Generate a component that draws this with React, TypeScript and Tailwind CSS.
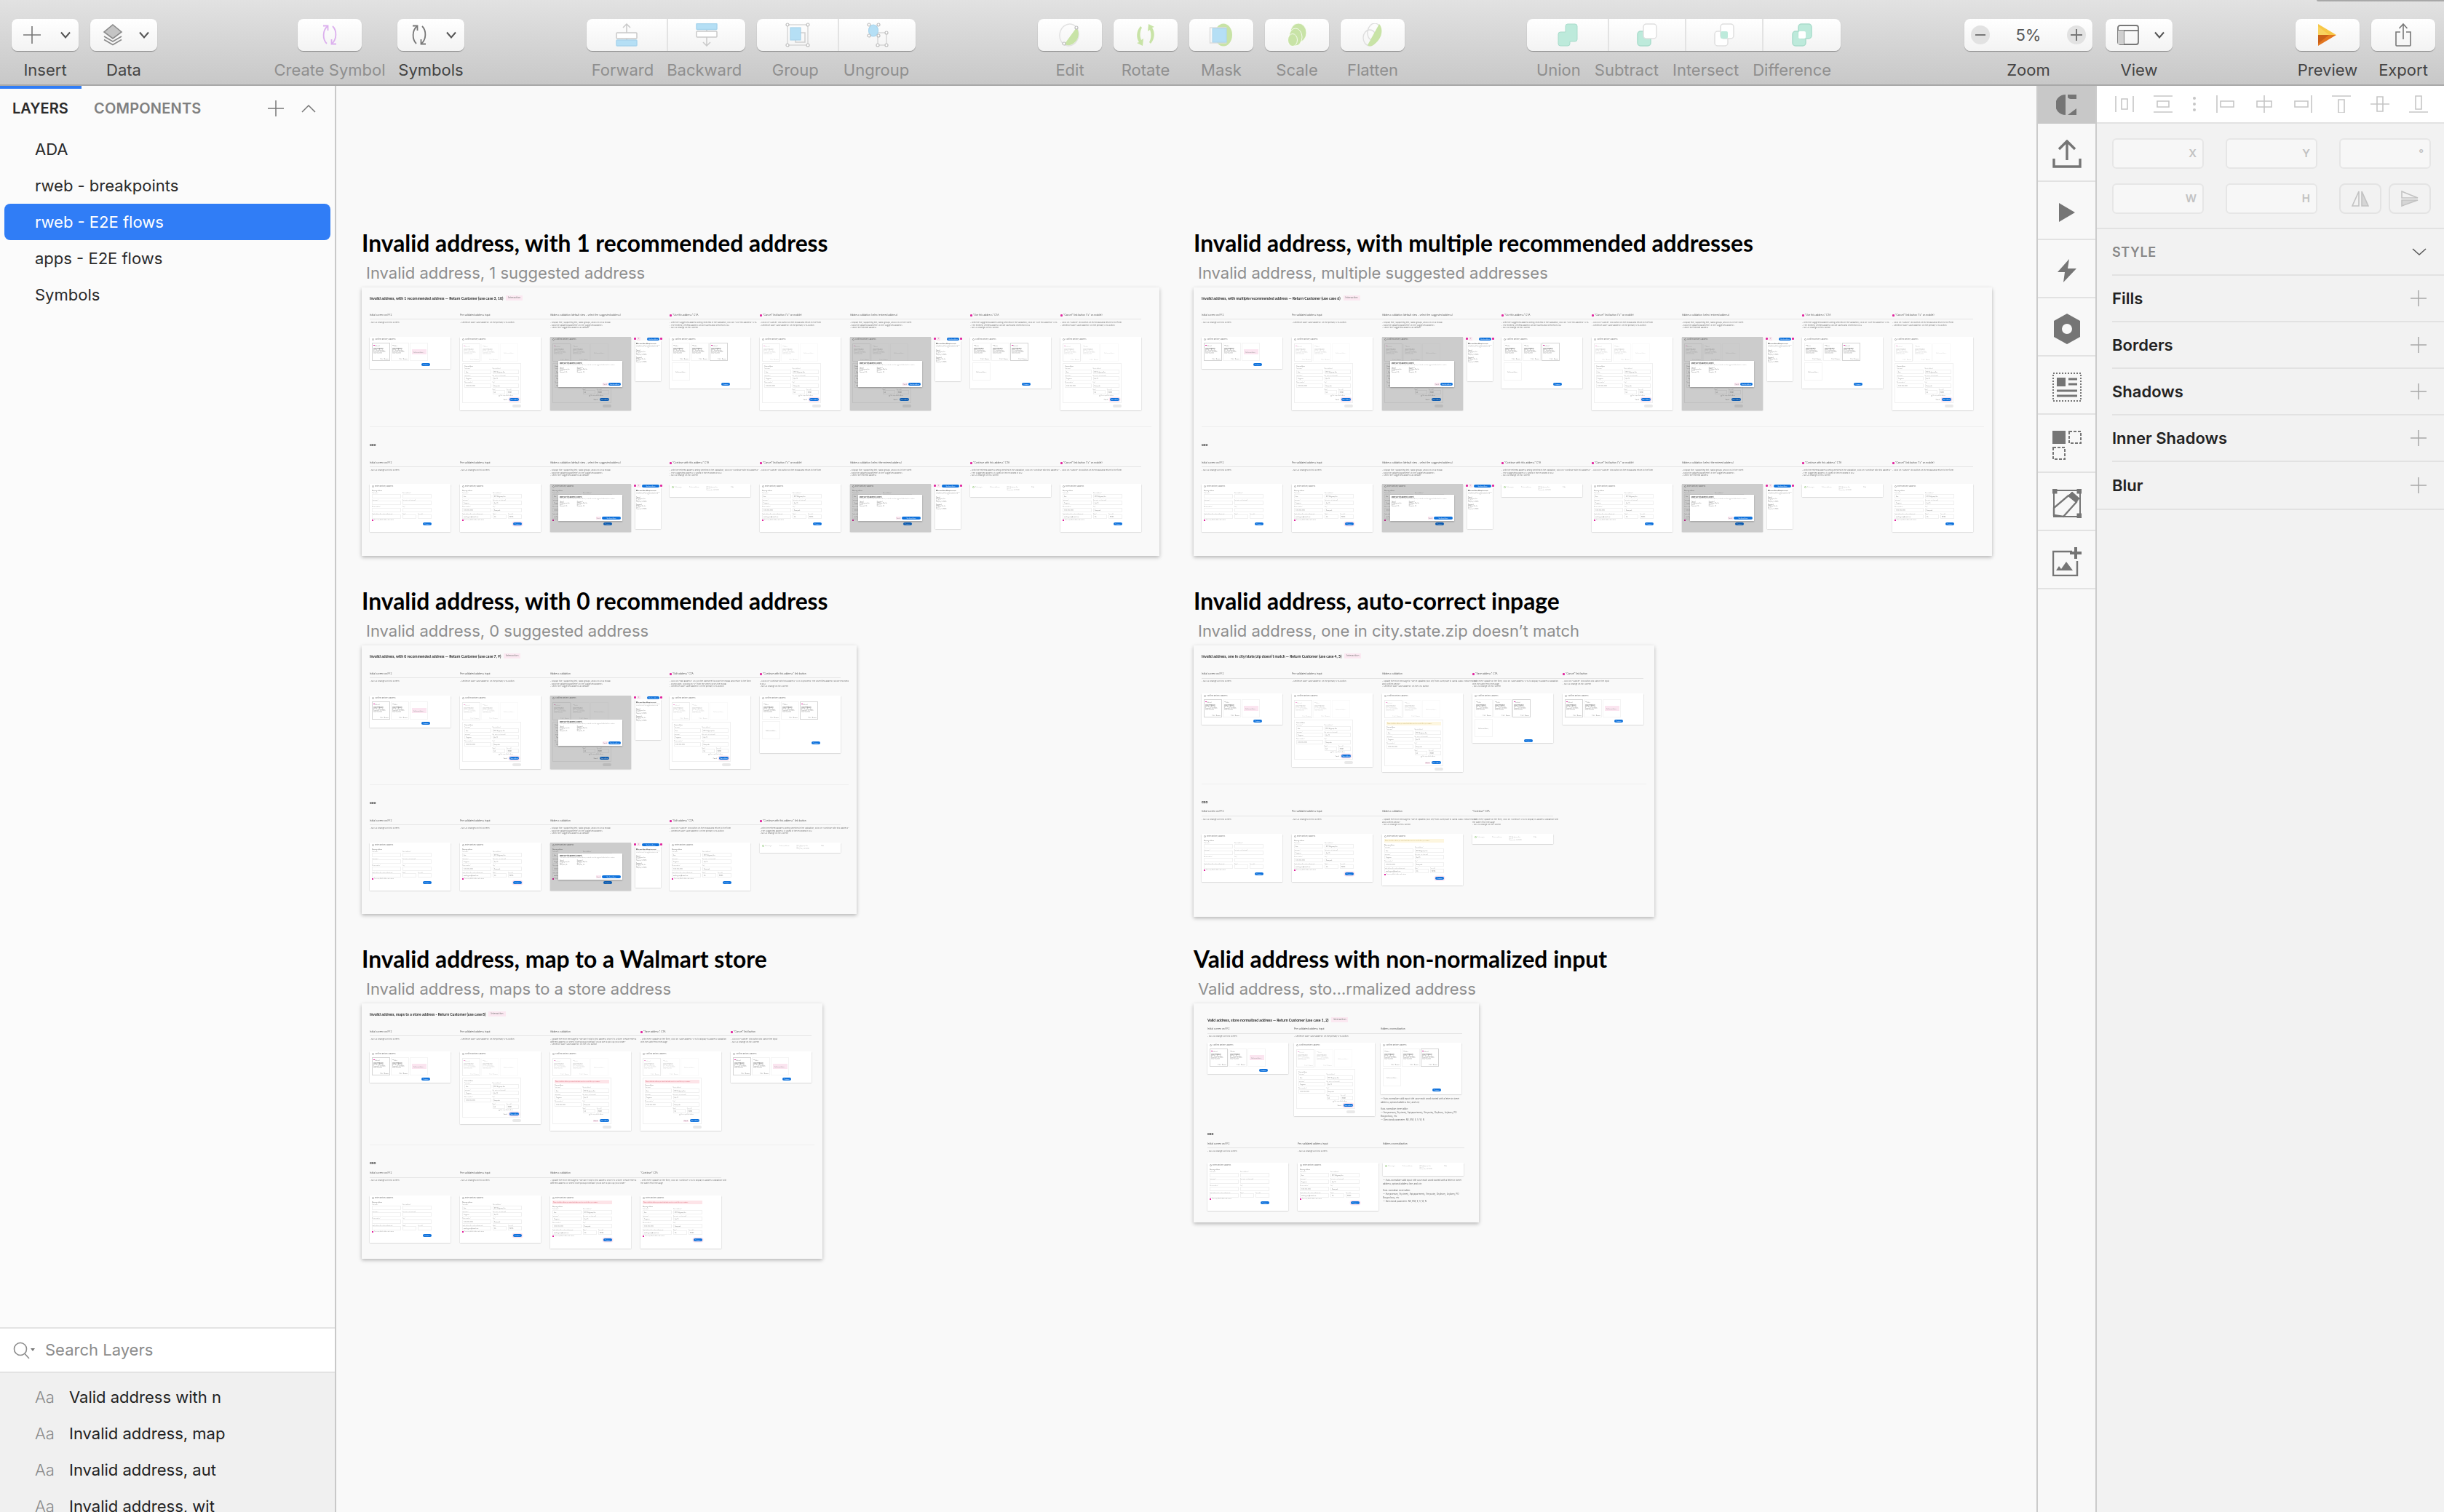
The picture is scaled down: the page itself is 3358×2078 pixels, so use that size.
import React from "react";

type Col = { t: string; m?: boolean; d: string[]; s: string; h: number; a: number; notes?: boolean };
type Sec = { title: number; rule: number; desc: number; screens: number; cols: Col[] };
type Board = {
  x: number; y: number; w: number; h: number; pad: number; title: string; sub: string; heading: string; headY: number;
  A: Sec; div?: number; gxo: number; B: Sec;
};

const Ring = () => <span className="block h-[3px] w-[3px] rounded-full border border-[#aaaaaa]" />;

const Head = ({ t = "Confirm delivery address" }: { t?: string }) => (
  <div className="flex h-[5px] items-center gap-[1px]">
    <Ring />
    <span className="text-[2.4px] leading-[3px] whitespace-nowrap text-[#777777]">{t}</span>
  </div>
);

const Blue = ({ t = "Continue", w = "w-[12px]", halo = false }: { t?: string; w?: string; halo?: boolean }) => (
  <span className={`flex h-[4px] items-center justify-center rounded-full bg-[#0f72dc] text-[1.6px] leading-[2px] text-white ${w} ${halo ? "shadow-[0_0_0_1.5px_#fbe3ef]" : ""}`}>{t}</span>
);

const Card = ({ sel, fade, active }: { sel?: boolean; fade?: boolean; active?: boolean }) => (
  <div className={`flex h-[25px] w-[25px] shrink-0 flex-col border p-[1px] ${sel ? "border-[#d4d4d4]" : "border-[#f3f3f3]"} ${fade ? "opacity-40" : ""}`}>
    <div className="flex h-[3px] items-center gap-[0.5px]">
      <span className={`block h-[1.5px] w-[1.5px] ${active ? "bg-[#e0279f]" : "bg-[#cccccc]"}`} />
      <span className="text-[1.6px] leading-[2px] text-[#777777]">{active ? "Selected" : "Select"}</span>
    </div>
    <span className="mt-[2px] text-[1.9px] leading-[2.4px] font-medium whitespace-nowrap text-[#666666]">Anna Ferguson</span>
    <span className="text-[1.6px] leading-[2px] whitespace-nowrap text-[#888888]">8512 Ridgeway Ave</span>
    <span className="text-[1.6px] leading-[2px] whitespace-nowrap text-[#888888]">Sunnyvale, CA 94085</span>
    <span className="text-[1.6px] leading-[2px] whitespace-nowrap text-[#888888]">(555) 555-5555</span>
    <div className="mt-auto flex justify-end gap-[1px] text-[1.6px] leading-[2px] text-[#777777]">
      <span>Edit</span><span>|</span><span>Remove</span>
    </div>
  </div>
);

const AddCard = ({ pink, fade }: { pink?: boolean; fade?: boolean }) => (
  <div className={`flex h-[25px] w-[25px] shrink-0 items-center justify-center border border-[#f4f4f4] ${fade ? "opacity-40" : ""}`}>
    <span className={`flex h-[7px] w-[20px] items-center justify-center text-[1.6px] leading-[2px] whitespace-nowrap text-[#888888] ${pink ? "bg-[#fbe5f0]" : ""}`}>Add new address +</span>
  </div>
);

const Field = ({ l, v, cls = "" }: { l: string; v?: string; cls?: string }) => (
  <div className={`flex flex-col ${cls}`}>
    <span className="h-[2.5px] text-[1.6px] leading-[2.5px] whitespace-nowrap text-[#a9a9a9]">{l}</span>
    <span className="flex h-[6px] items-center border border-[#f0f0f0] pl-[1px] text-[1.7px] leading-[2px] whitespace-nowrap text-[#777777]">{v}</span>
  </div>
);

const Fields = ({ filled, email }: { filled?: boolean; email?: boolean }) => (
  <div className="grid grid-cols-2 gap-x-[2px] gap-y-[1px]">
    <Field l="First name*" v={filled ? "Ann" : ""} />
    <Field l="Street address*" v={filled ? "8512 Ridgeway Ave" : ""} />
    <Field l="Last name*" v={filled ? "Ferguson" : ""} />
    <Field l="Apt, suite, etc (optional)" v={filled ? "Apt 23" : ""} />
    <Field l="Phone number*" v={filled ? "(555) 555-5555" : ""} />
    <Field l="City*" v={filled ? "Sunnyvale" : ""} />
    {email ? <Field l="Email address (for order notifications)" v={filled ? "ann.ferguson@email.com" : ""} /> : <span />}
    <div className="flex gap-[2px]">
      <Field l="State*" v={filled ? "CA" : ""} cls="flex-1" />
      <Field l="Zip code*" v={filled ? "94085" : ""} cls="flex-1" />
    </div>
  </div>
);

const Banner = ({ c }: { c?: string }) =>
  c ? (
    <div className={`mb-[1px] flex h-[5px] items-center px-[1px] text-[1.5px] leading-[2px] ${c === "y" ? "bg-[#fdf6df] text-[#c9b36a]" : "bg-[#fde4e8] text-[#d9606f]"}`}>
      Please check the address you entered and make sure it is correct before you continue.
    </div>
  ) : null;

const Panel = ({ banner, halo }: { banner?: string; halo?: boolean }) => (
  <div className={`mt-[2px] flex w-[81px] flex-col border border-[#f0f0f0] p-[2px] ${banner ? "h-[64px]" : "h-[55px]"}`}>
    <Banner c={banner} />
    <span className="h-[3px] text-[1.7px] leading-[3px] text-[#666666]">Home address</span>
    <Fields filled />
    <div className="mt-[1px] flex items-center justify-end gap-[1px] pr-[8px]">
      <span className="block h-[1.5px] w-[1.5px] border border-[#dddddd]" />
      <span className="text-[1.4px] leading-[2px] text-[#999999]">Use as my default address</span>
    </div>
    <div className="mt-auto flex items-center justify-end gap-[2px]">
      <span className={`px-[1px] text-[1.6px] leading-[3px] text-[#666666] ${banner ? "bg-[#fbe5f0]" : ""}`}>Cancel</span>
      <Blue t="Save address" w="w-[13px]" halo={halo} />
    </div>
  </div>
);

const Pill = () => <div className="mt-[2px] ml-[69px] h-[4px] w-[12px] rounded-full bg-[#e9e9e9]" />;

const Cards = ({ fade, third }: { fade?: boolean; third?: boolean }) => (
  <div className="flex gap-[1px]">
    <Card sel={!third} active={!third} fade={fade} />
    <Card fade={fade} />
    {third ? <Card sel active /> : <AddCard pink={!fade} fade={fade} />}
  </div>
);

const Shell = ({ h, w = 111, children }: { h: number; w?: number; children: React.ReactNode }) => (
  <div className="relative flex shrink-0 flex-col overflow-hidden bg-white px-[3px] pt-[1px] shadow-[0_0.5px_1.5px_rgba(0,0,0,0.3)]" style={{ width: w, height: h }}>
    {children}
  </div>
);

const FormInner = ({ banner, halo }: { banner?: string; halo?: boolean }) => (
  <>
    <Head />
    <div className="mt-[3px]"><Cards fade /></div>
    <Panel banner={banner} halo={halo} />
    <Pill />
  </>
);

const GxoInner = ({ filled, banner, halo }: { filled?: boolean; banner?: string; halo?: boolean }) => (
  <>
    <Head t="Enter delivery address" />
    <div className="mt-[1px] w-[82px]">
      <Banner c={banner} />
      <span className="block h-[4px] text-[1.7px] leading-[4px] text-[#666666]">Shipping address</span>
      <Fields filled={filled} email />
      <div className="mt-[1px] flex items-center gap-[1px]">
        <span className="block h-[2px] w-[2px] bg-[#e0279f]" />
        <span className="text-[1.4px] leading-[2px] text-[#999999]">Save as my default address and continue</span>
      </div>
      <div className="mt-[2px] flex justify-end"><Blue halo={halo} /></div>
    </div>
  </>
);

const Dot = () => <span className="block h-[3px] w-[3px] shrink-0 rounded-[1px] bg-[#e0279f]" />;

const Side = ({ gxo }: { gxo?: boolean }) => (
  <div className="flex w-[39px] shrink-0 flex-col">
    <div className="flex h-[5px] items-center gap-[1px]">
      <Dot />
      <span className="flex h-[5px] w-[5px] items-center justify-center bg-[#fbe5f0] text-[2px] text-[#999999]">x</span>
      <span className="ml-auto flex"><Blue t="Use this address" w={gxo ? "w-[24px]" : "w-[17px]"} /></span>
      <Dot />
    </div>
    <div className={`mx-[2px] flex flex-col bg-white p-[1px] shadow-[0_0.5px_1.5px_rgba(0,0,0,0.3)] ${gxo ? "h-[57px]" : "h-[56px]"}`}>
      <span className="mt-[2px] text-[1.7px] leading-[2.4px] font-bold text-[#444444]">Make sure this address is correct</span>
      <span className="mt-[1px] text-[1.3px] leading-[1.9px] text-[#999999]">Your address couldn&apos;t be verified. Check the address you entered or use the suggested address below.</span>
      <span className="mt-[3px] text-[1.5px] leading-[2px] text-[#666666]">Entered</span>
      <span className="text-[1.4px] leading-[1.9px] text-[#888888]">8512 Ridgeway Ave<br />Apt 23<br />Sunnyvale, CA 94085</span>
      <span className="mt-[2px] text-[1.5px] leading-[2px] text-[#666666]">Suggested</span>
      <span className="text-[1.4px] leading-[1.9px] text-[#888888]">8512 Ridge Way Ave<br />Apt 23<br />Sunnyvale, CA 94085</span>
    </div>
  </div>
);

const Overlay = ({ h, gxo }: { h: number; gxo?: boolean }) => (
  <div className="flex gap-[4px]">
    <Shell h={h}>
      {gxo ? <GxoInner filled /> : <FormInner />}
      <div className="absolute inset-0 bg-black/20" />
      <div className={`absolute left-[11px] flex h-[36px] w-[88px] flex-col bg-white p-[2px] shadow-[0_1px_2px_rgba(0,0,0,0.25)] ${gxo ? "top-[15px]" : "top-[33px]"}`}>
        <span className="text-[1.9px] leading-[3px] font-bold text-[#444444]">Make sure this address is correct</span>
        <span className="text-[1.4px] leading-[2px] text-[#aaaaaa]">Your address couldn&apos;t be verified. Check the address you entered or use the suggested address below to continue.</span>
        <div className="mt-[2px] flex gap-[10px] text-[1.5px] leading-[2px] text-[#777777]">
          <span>Entered<br />8512 Ridgeway Ave<br />Apt 23<br />Sunnyvale, CA</span>
          <span>Suggested<br />8512 Ridge Way Ave<br />Apt 23<br />Sunnyvale, CA</span>
        </div>
        <div className="mt-auto flex items-center justify-end gap-[1px]">
          <span className="bg-[#fbe5f0] px-[1px] text-[1.6px] leading-[4px] text-[#888888]">Cancel</span>
          <Blue t="Use this address" w={gxo ? "w-[26px]" : "w-[17px]"} />
        </div>
      </div>
    </Shell>
    <Side gxo={gxo} />
  </div>
);

const Strip = ({ h }: { h: number }) => (
  <Shell h={h}>
    <div className="mt-[2px] flex gap-[10px] text-[1.7px] leading-[2.2px] text-[#bbbbbb]">
      <span className="flex gap-[1px]"><span className="block h-[3px] w-[3px] rounded-full border border-[#9fd08a]" />Delivering to</span>
      <span>Delivery address</span>
      <span className="w-[24px]">8512 Ridgeway Ave<br />Apt 23<br />Sunnyvale, CA 94085</span>
      <span className="text-[#888888]">Edit</span>
    </div>
  </Shell>
);

const Screen = ({ c }: { c: Col }) => {
  const { s, h } = c;
  if (s === "initial")
    return (
      <Shell h={h}>
        <Head />
        <div className="mt-[2px]"><Cards /></div>
        <div className="mt-[3px] flex w-[80px] justify-end"><Blue /></div>
      </Shell>
    );
  if (s === "selected")
    return (
      <Shell h={h}>
        <Head />
        <div className="mt-[2px]"><Cards third /></div>
        <div className="mt-[2px]"><AddCard /></div>
        <div className="mt-[3px] flex w-[80px] justify-end"><Blue /></div>
      </Shell>
    );
  if (s === "form") return <Shell h={h}><FormInner halo /></Shell>;
  if (s === "formY") return <Shell h={h}><FormInner banner="y" /></Shell>;
  if (s === "formR") return <Shell h={h}><FormInner banner="r" /></Shell>;
  if (s === "overlay") return <Overlay h={h} />;
  if (s === "gxoOverlay") return <Overlay h={h} gxo />;
  if (s === "gxoEmpty") return <Shell h={h}><GxoInner /></Shell>;
  if (s === "gxoFilled") return <Shell h={h}><GxoInner filled /></Shell>;
  if (s === "gxoHalo") return <Shell h={h}><GxoInner filled halo /></Shell>;
  if (s === "gxoY") return <Shell h={h}><GxoInner filled banner="y" halo /></Shell>;
  if (s === "gxoR") return <Shell h={h}><GxoInner filled banner="r" halo /></Shell>;
  return <Strip h={h} />;
};

const Notes = () => (
  <div className="mt-[4px] w-[112px] text-[2.9px] leading-[5.3px] text-[#666666]">
    <p>— Auto-normalize valid input: title case each word started with a letter in street address, optional address line, and city</p>
    <p className="mt-[3px]">Auto-normalize street abbr:</p>
    <p>— Ave(avenue), St(street), Apt(apartment), Ste(suite), Dr(drive), Ln(lane), PO Box(po box), etc</p>
    <p>— Directional parameter: NE, NW, E, S, W, N</p>
  </div>
);

const Section = ({ s, height }: { s: Sec; height: number }) => (
  <div className="flex shrink-0" style={{ height }}>
    {s.cols.map((c, i) => (
      <div key={i} className="flex shrink-0 flex-col" style={{ width: c.a }}>
        <div className="flex items-start gap-[1px]" style={{ height: s.rule - s.title + 5 }}>
          {c.m ? <span className="mt-[3.5px]"><Dot /></span> : null}
          <span className="text-[3.2px] leading-[10px] whitespace-nowrap text-[#555555]">{c.t}</span>
        </div>
        <div className="h-px w-full shrink-0 bg-[#e4e4e4]" />
        <div className="pr-[8px]" style={{ height: s.screens - s.rule - 1, paddingTop: s.desc - s.rule - 3 }}>
          {c.d.map((l, j) => (
            <p key={j} className="text-[2.7px] leading-[3.7px] whitespace-nowrap text-[#777777]">{l}</p>
          ))}
        </div>
        <Screen c={c} />
        {c.notes ? <Notes /> : null}
      </div>
    ))}
  </div>
);

const NC = "- No UX changes on this screen";
const SC = "- Sentence case 'Save address' on the primary CTA button";
const VAL = ["- Display title, supporting text, radio groups, and CTAs in a modal", "- Bold the updated parameters in the suggested address", "- Select the suggested address as default"];
const VALE = ["- Display title, supporting text, radio groups, and CTAs in the sheet", "- Bold the updated parameters in the suggested address", "- Select the entered address"];
const USE = ["- With the suggested address being selected in the validation, click on \"Use this address\" CTA", "- The entered, verified address will be saved and selected in FF2", "- No UX change on this screen"];
const CAN = ["- Click on \"Cancel\" link button on the modal and return to the form", "- Sentence case 'Save address' on the primary CTA button"];
const CONT = ["- With the entered address being selected in the validation, click on \"Continue with this address\"", "- The suggested address is saved in the recorded in FF2", "- No UX change on this screen"];

const rowA12 = (): Col[] => [
  { t: "Initial screen on FF2", d: [NC], s: "initial", h: 44, a: 124 },
  { t: "Pre-validated address input", d: [SC], s: "form", h: 101, a: 124 },
  { t: "Address validation (default view - select the suggested address)", d: VAL, s: "overlay", h: 101, a: 164 },
  { t: "\"Use this address\" CTA", m: true, d: USE, s: "selected", h: 71, a: 124 },
  { t: "\"Cancel\" link button (\"x\" on mobile)", m: true, d: CAN, s: "form", h: 101, a: 124 },
  { t: "Address validation (select entered address)", d: VALE, s: "overlay", h: 101, a: 165 },
  { t: "\"Use this address\" CTA", m: true, d: USE, s: "selected", h: 71, a: 124 },
  { t: "\"Cancel\" link button (\"x\" on mobile)", m: true, d: CAN, s: "form", h: 101, a: 111 },
];
const rowB12 = (): Col[] => [
  { t: "Initial screen on FF2", d: [NC], s: "gxoEmpty", h: 66, a: 124 },
  { t: "Pre-validated address input", d: [NC], s: "gxoHalo", h: 66, a: 124 },
  { t: "Address validation (default view - select the suggested address)", d: VAL, s: "gxoOverlay", h: 66, a: 164 },
  { t: "\"Continue with this address\" CTA", m: true, d: CONT, s: "strip", h: 18, a: 124 },
  { t: "\"Cancel\" link button (\"x\" on mobile)", m: true, d: CAN.slice(0, 1), s: "gxoFilled", h: 66, a: 124 },
  { t: "Address validation (select the entered address)", d: VALE, s: "gxoOverlay", h: 66, a: 165 },
  { t: "\"Continue with this address\" CTA", m: true, d: CONT, s: "strip", h: 18, a: 124 },
  { t: "\"Cancel\" link button (\"x\" on mobile)", m: true, d: CAN.slice(0, 1), s: "gxoFilled", h: 66, a: 111 },
];

const secA12 = { title: 38, rule: 43, desc: 49, screens: 68 };
const secB12 = { title: 241, rule: 246, desc: 252, screens: 270 };

const boards: Board[] = [
  {
    x: 497, y: 395, w: 1096, h: 369, pad: 11,
    title: "Invalid address, with 1 recommended address", sub: "Invalid address, 1 suggested address",
    heading: "Invalid address, with 1 recommended address — Return Customer (use case 3, 10)", headY: 15,
    A: { ...secA12, cols: rowA12() }, div: 191, gxo: 217, B: { ...secB12, cols: rowB12() },
  },
  {
    x: 1640, y: 395, w: 1097, h: 369, pad: 11,
    title: "Invalid address, with multiple recommended addresses", sub: "Invalid address, multiple suggested addresses",
    heading: "Invalid address, with multiple recommended address — Return Customer (use case 6)", headY: 15,
    A: { ...secA12, cols: rowA12() }, div: 191, gxo: 217, B: { ...secB12, cols: rowB12() },
  },
  {
    x: 497, y: 887, w: 680, h: 369, pad: 11,
    title: "Invalid address, with 0 recommended address", sub: "Invalid address, 0 suggested address",
    heading: "Invalid address, with 0 recommended address — Return Customer (use case 7, 9)", headY: 15,
    A: {
      title: 39, rule: 44, desc: 50, screens: 69,
      cols: [
        { t: "Initial screen on FF2", d: [NC], s: "initial", h: 44, a: 124 },
        { t: "Pre-validated address input", d: [SC], s: "form", h: 101, a: 124 },
        { t: "Address validation", d: VAL, s: "overlay", h: 101, a: 164 },
        { t: "\"Edit address\" CTA", m: true, d: ["- Click on \"Edit address\" CTA on the sidesheet to close the modal and return to the form", "- Dismissible; clicking on \"x\" from the sheet closes the modal", "- Sentence case 'Save address' on the primary CTA button"], s: "form", h: 101, a: 124 },
        { t: "\"Continue with this address\" link button", m: true, d: ["- Click on \"Continue with this address\" CTA to proceed. The unverified address will be recorded", "in FF2", "- No UX change on this screen"], s: "selected", h: 79, a: 111 },
      ],
    },
    div: 191, gxo: 217,
    B: {
      title: 241, rule: 246, desc: 252, screens: 271,
      cols: [
        { t: "Initial screen on FF2", d: [NC], s: "gxoEmpty", h: 66, a: 124 },
        { t: "Pre-validated address input", d: [NC], s: "gxoHalo", h: 66, a: 124 },
        { t: "Address validation", d: VAL, s: "gxoOverlay", h: 66, a: 164 },
        { t: "\"Edit address\" CTA", m: true, d: CAN, s: "gxoFilled", h: 66, a: 124 },
        { t: "\"Continue with this address\" link button", m: true, d: CONT, s: "strip", h: 14, a: 111 },
      ],
    },
  },
  {
    x: 1640, y: 887, w: 633, h: 373, pad: 11,
    title: "Invalid address, auto-correct inpage", sub: "Invalid address, one in city.state.zip doesn’t match",
    heading: "Invalid address, one in city/state/zip doesn’t match — Return Customer (use case 4, 5)", headY: 15,
    A: {
      title: 39, rule: 45, desc: 50, screens: 66,
      cols: [
        { t: "Initial screen on FF2", d: [NC], s: "initial", h: 43, a: 124 },
        { t: "Pre-validated address input", d: [SC], s: "form", h: 101, a: 124 },
        { t: "Address validation", d: ["- Update the error message to \"We've updated your city from Sunnyvale to Santa Clara. Please review", "and confirm below\"", "- Sentence case 'Save address' on the CTA button"], s: "formY", h: 108, a: 124 },
        { t: "\"Save address\" CTA", m: true, d: ["- With every update on the form, click on 'Save address' CTA to display in-address validation", "with the same error message", "- No UX change on this screen"], s: "selected", h: 68, a: 124 },
        { t: "\"Cancel\" link button", m: true, d: ["- Click on \"Cancel\" link button will cancel the input", "- No UX change on this screen"], s: "initial", h: 43, a: 111 },
      ],
    },
    div: 190, gxo: 216,
    B: {
      title: 228, rule: 234, desc: 240, screens: 259,
      cols: [
        { t: "Initial screen on FF2", d: [NC], s: "gxoEmpty", h: 66, a: 124 },
        { t: "Pre-validated address input", d: [NC], s: "gxoHalo", h: 66, a: 124 },
        { t: "Address validation", d: ["- Update the error message to \"We've updated your city from Sunnyvale to Santa Clara. Please review", "and confirm below\"", "- No UX change on this screen"], s: "gxoY", h: 71, a: 124 },
        { t: "\"Continue\" CTA", d: ["- With every update on the form, click on 'Continue' CTA to display in-address validation with", "the same error message", "- No UX change on this screen"], s: "strip", h: 14, a: 111 },
      ],
    },
  },
  {
    x: 497, y: 1379, w: 633, h: 351, pad: 11,
    title: "Invalid address, map to a Walmart store", sub: "Invalid address, maps to a store address",
    heading: "Invalid address, maps to a store address - Return Customer (use case 8)", headY: 15,
    A: {
      title: 39, rule: 44, desc: 50, screens: 66,
      cols: [
        { t: "Initial screen on FF2", d: [NC], s: "initial", h: 43, a: 124 },
        { t: "Pre-validated address input", d: [SC], s: "form", h: 100, a: 124 },
        { t: "Address validation", d: ["- Update the error message to \"We can't ship to this address since it's a store. Please enter a", "different address or select store pickup instead if you'd like to pick up your order\"", "- Sentence case 'Save address' on the CTA button"], s: "formR", h: 109, a: 124 },
        { t: "\"Save address\" CTA", m: true, d: ["- With every update on the form, click on 'Save address' CTA to display in-address validation", "with the same error message"], s: "formR", h: 109, a: 124 },
        { t: "\"Cancel\" link button", m: true, d: ["- Click on \"Cancel\" link button will cancel the input", "- No UX change on this screen"], s: "initial", h: 43, a: 111 },
      ],
    },
    div: 194, gxo: 220,
    B: {
      title: 233, rule: 239, desc: 244, screens: 264,
      cols: [
        { t: "Initial screen on FF2", d: [NC], s: "gxoEmpty", h: 65, a: 124 },
        { t: "Pre-validated address input", d: [NC], s: "gxoHalo", h: 65, a: 124 },
        { t: "Address validation", d: ["- Update the error message to \"We can't ship to this address since it's a store. Please enter a", "different address or select store pickup instead if you'd like to pick up your order\""], s: "gxoR", h: 73, a: 124 },
        { t: "\"Continue\" CTA", d: ["- With every update on the form, click on 'Continue' CTA to display in-address validation with", "the same error message"], s: "gxoR", h: 73, a: 111 },
      ],
    },
  },
  {
    x: 1640, y: 1379, w: 392, h: 301, pad: 19,
    title: "Valid address with non-normalized input", sub: "Valid address, sto…rmalized address",
    heading: "Valid address, store normalized address — Return Customer (use case 1, 2)", headY: 23,
    A: {
      title: 35, rule: 41, desc: 46, screens: 54,
      cols: [
        { t: "Initial screen on FF2", d: [NC], s: "initial", h: 43, a: 119 },
        { t: "Pre-validated address input", d: [SC], s: "form", h: 101, a: 119 },
        { t: "Address normalization", d: [], s: "selected", h: 71, a: 112, notes: true },
      ],
    },
    gxo: 180,
    B: {
      title: 193, rule: 198, desc: 204, screens: 219,
      cols: [
        { t: "Initial screen on FF2", d: [NC], s: "gxoEmpty", h: 66, a: 124 },
        { t: "Pre-validated address input", d: [NC], s: "gxoHalo", h: 66, a: 117 },
        { t: "Address normalization", d: [], s: "strip", h: 18, a: 112, notes: true },
      ],
    },
  },
];

const Artboard = ({ b }: { b: Board }) => {
  const topA = b.A.title - 5;
  const topB = b.B.title - 5;
  const divAt = b.div ?? b.gxo - 8;
  return (
    <div className="absolute flex flex-col" style={{ left: b.x - 462, top: b.y - 80 - 118, width: b.w }}>
      <div className="flex h-[40px] items-center font-[Lato,sans-serif] text-[31.8px] font-bold whitespace-nowrap text-black">{b.title}</div>
      <div className="flex h-[40px] items-center pl-[6px] text-[22px] whitespace-nowrap text-[#8e8e8e]">{b.sub}</div>
      <div className="overflow-hidden bg-[#f9f9f9] shadow-[0_2px_5px_rgba(0,0,0,0.28)]" style={{ height: b.h }}>
        <div className="flex h-full flex-col blur-[0.35px]" style={{ paddingLeft: b.pad, paddingRight: b.pad }}>
          <div className="flex shrink-0 items-start gap-[4px]" style={{ height: topA, paddingTop: b.headY - 4 }}>
            <span className="font-[Lato,sans-serif] text-[5.1px] leading-[8px] font-bold whitespace-nowrap text-[#222222]">{b.heading}</span>
            <span className="flex h-[7px] items-center bg-[#fbe8f1] px-[3px] text-[3.4px] text-[#777777]">Interaction</span>
          </div>
          <Section s={b.A} height={divAt - topA} />
          <div className={`h-px w-full shrink-0 ${b.div ? "bg-[#efefef]" : ""}`} />
          <div className="shrink-0" style={{ height: topB - divAt - 1, paddingTop: b.gxo - divAt - 1 - 4 }}>
            <span className="block text-[3.8px] leading-[8px] font-bold text-[#222222]">GXO</span>
          </div>
          <Section s={b.B} height={200} />
        </div>
      </div>
    </div>
  );
};

/* ---------- toolbar icons ---------- */
const Chev = () => (
  <svg width="14" height="10" viewBox="0 0 14 10" fill="none" stroke="#555" strokeWidth="2"><path d="M1 1.5 7 8.5 13 1.5" /></svg>
);
const PlusI = () => (
  <svg width="24" height="24" viewBox="0 0 24 24" stroke="#777" strokeWidth="1.6"><path d="M12 0v24M0 12h24" /></svg>
);
const DataI = () => (
  <svg width="30" height="30" viewBox="0 0 30 30" fill="none" stroke="#8a8a8a" strokeWidth="1.6">
    <path d="M15 1 27 11 15 20 3 11Z" fill="#c4c4c4" />
    <path d="M3 17 15 24 27 17M3 21.5 15 28.5 27 21.5" />
  </svg>
);
const SymI = ({ c, c2 }: { c: string; c2?: string }) => (
  <svg width="28" height="30" viewBox="0 0 28 30" fill="none" stroke={c} strokeWidth="1.8">
    <path d="M11 3C4 9 4 21 10 27" />
    <path d="M5 2.5h6.5V9" />
    <path d="M17 27C24 21 24 9 18 3" stroke={c2 ?? c} />
    <path d="M23 27.5h-6.5V21" stroke={c2 ?? c} />
  </svg>
);
const ForwardI = () => (
  <svg width="30" height="32" viewBox="0 0 30 32" fill="none" stroke="#c9c9c9" strokeWidth="1.5">
    <path d="M15 1v24M10 6l5-5 5 5" />
    <rect x="1" y="13" width="28" height="8" rx="1" fill="#fff" />
    <rect x="1" y="23" width="28" height="8" rx="1" fill="#b5dff5" stroke="#a8d4ec" />
  </svg>
);
const BackwardI = () => (
  <svg width="30" height="32" viewBox="0 0 30 32" fill="none" stroke="#c9c9c9" strokeWidth="1.5">
    <path d="M15 8v23M10 26l5 5 5-5" />
    <rect x="1" y="0.5" width="28" height="8" rx="1" fill="#b5dff5" stroke="#a8d4ec" />
    <rect x="1" y="11" width="28" height="8" rx="1" fill="#fff" />
  </svg>
);
const Handle = ({ x, y }: { x: number; y: number }) => <circle cx={x} cy={y} r="2" fill="#fff" stroke="#bdbdbd" strokeWidth="1.2" />;
const GroupI = () => (
  <svg width="34" height="34" viewBox="0 0 34 34" fill="none" stroke="#cfcfcf" strokeWidth="1.2">
    <rect x="3" y="3" width="28" height="28" />
    <rect x="14" y="14" width="13" height="13" strokeWidth="1.5" />
    <rect x="7" y="7" width="14" height="17" fill="#b5dff5" stroke="#a8d4ec" />
    <Handle x={3} y={3} /><Handle x={31} y={3} /><Handle x={3} y={31} /><Handle x={31} y={31} />
  </svg>
);
const UngroupI = () => (
  <svg width="30" height="34" viewBox="0 0 30 34" fill="none" stroke="#cfcfcf" strokeWidth="1.2">
    <rect x="15" y="14" width="12" height="17" />
    <ellipse cx="9" cy="11" rx="6.5" ry="8" fill="#b5dff5" stroke="#a8d4ec" />
    <Handle x={3} y={3} /><Handle x={16} y={3} /><Handle x={3} y={18} /><Handle x={16} y={18} />
    <Handle x={27} y={14} /><Handle x={15} y={31} /><Handle x={27} y={31} />
  </svg>
);
const G = "#c8e3a6";
const EditI = () => (
  <svg width="32" height="32" viewBox="0 0 32 32" fill="none">
    <ellipse cx="15" cy="16" rx="13" ry="15" stroke="#e2e2e2" strokeWidth="1.5" transform="rotate(12 15 16)" />
    <path d="M25 6C31 14 27 27 16 30 12 31 9 29 9 28Z" fill={G} />
    <Handle x={25} y={6} /><Handle x={8} y={28} />
  </svg>
);
const RotateI = () => (
  <svg width="28" height="32" viewBox="0 0 28 32" fill={G}>
    <path d="M7 4C1 11 1 20 5 26L2 27 10 31 11 21 8 23C6 18 6 11 9 6Z" />
    <path d="M21 28C27 21 27 12 23 6L26 5 18 1 17 11 20 9C22 14 22 21 19 26Z" />
  </svg>
);
const MaskI = () => (
  <svg width="34" height="32" viewBox="0 0 34 32">
    <ellipse cx="20" cy="16" rx="12" ry="15.5" fill={G} />
    <rect x="1.5" y="6" width="22" height="21" fill="none" stroke="#dddddd" strokeWidth="1.5" />
    <rect x="5" y="7" width="19" height="19" fill="#b5dff5" stroke="#a8d4ec" />
  </svg>
);
const ScaleI = () => (
  <svg width="30" height="32" viewBox="0 0 30 32" fill={G} stroke="#fff" strokeWidth="0.8">
    <ellipse cx="17" cy="13" rx="11" ry="13" fill={G} />
    <ellipse cx="13" cy="19" rx="9" ry="12" />
    <ellipse cx="9" cy="23" rx="6.5" ry="8.5" />
  </svg>
);
const FlattenI = () => (
  <svg width="30" height="32" viewBox="0 0 30 32" fill="none">
    <ellipse cx="17" cy="12" rx="9" ry="12" stroke="#dedede" strokeWidth="1.4" transform="rotate(10 17 12)" />
    <ellipse cx="11" cy="20" rx="9" ry="11" stroke="#dedede" strokeWidth="1.4" />
    <path d="M24 1C31 9 27 24 14 31 11 32 9 31 8 30Z" fill={G} />
  </svg>
);
const T = "#bdeadb";
const TS = "#a9dccb";
const R = ({ x, y, w = 18, h = 20, f = "#fff", s = "#dfdfdf" }: { x: number; y: number; w?: number; h?: number; f?: string; s?: string }) => (
  <rect x={x} y={y} width={w} height={h} rx="4" fill={f} stroke={s} strokeWidth="1.5" />
);
const UnionI = () => (
  <svg width="32" height="32" viewBox="0 0 32 32">
    <path d="M13 4a3 3 0 0 1 3-3h10a3 3 0 0 1 3 3v18a3 3 0 0 1-3 3h-7v3a3 3 0 0 1-3 3H6a3 3 0 0 1-3-3V15a3 3 0 0 1 3-3h7Z" fill={T} stroke={TS} />
  </svg>
);
const SubtractI = () => (
  <svg width="32" height="32" viewBox="0 0 32 32">
    <R x={3} y={11} f={T} s={TS} />
    <R x={11} y={1} />
  </svg>
);
const IntersectI = () => (
  <svg width="32" height="32" viewBox="0 0 32 32">
    <R x={3} y={11} />
    <R x={11} y={1} />
    <rect x="11" y="11" width="10" height="10" rx="2" fill={T} />
  </svg>
);
const DifferenceI = () => (
  <svg width="32" height="32" viewBox="0 0 32 32">
    <R x={3} y={11} f={T} s={TS} />
    <R x={11} y={1} f={T} s={TS} />
    <rect x="11" y="11" width="10" height="10" rx="2" fill="#fff" />
  </svg>
);
const ViewI = () => (
  <svg width="30" height="28" viewBox="0 0 30 28" fill="none" stroke="#777" strokeWidth="1.8">
    <rect x="1" y="1" width="28" height="26" rx="3" />
    <path d="M1 8h28" />
    <path d="M9 8v19" strokeWidth="1.8" />
    <rect x="1" y="8" width="8" height="19" fill="#cfcfcf" stroke="none" />
  </svg>
);
const PreviewI = () => (
  <svg width="28" height="30" viewBox="0 0 28 30">
    <path d="M1 0 26 15 1 15Z" fill="#f7c747" />
    <path d="M1 30 26 15 1 15Z" fill="#e2761f" />
    <path d="M1 3 16 15 1 15Z" fill="#f9d25f" />
    <path d="M1 27 16 15 1 15Z" fill="#c95f17" />
  </svg>
);
const ExportI = () => (
  <svg width="24" height="32" viewBox="0 0 24 32" fill="none" stroke="#777" strokeWidth="1.6">
    <path d="M12 22V1M6.5 7 12 1l5.5 6" />
    <path d="M8 12H2v18a1 1 0 0 0 1 1h18a1 1 0 0 0 1-1V12h-6" />
  </svg>
);

const btn = "flex h-[44px] items-center rounded-[8px] bg-linear-to-b from-white to-[#f3f3f3] shadow-[0_1px_1px_rgba(0,0,0,0.35)]";
const Label = ({ dim, children }: { dim?: boolean; children: React.ReactNode }) => (
  <span className={`text-[22px] leading-[26px] whitespace-nowrap ${dim ? "text-[#8f8f8f]" : "text-[#444444]"}`}>{children}</span>
);

const Tool = ({ label, dim, cls, icon, chev }: { label: string; dim?: boolean; cls: string; icon: React.ReactNode; chev?: boolean }) => (
  <div className={`flex shrink-0 flex-col items-center ${cls} ${chev ? "w-[92px]" : "w-[88px]"}`}>
    <div className={`${btn} w-full ${chev ? "justify-between pr-[11px] pl-[16px]" : "justify-center"}`}>
      {icon}
      {chev ? <Chev /> : null}
    </div>
    <div className="mt-[13px] flex w-full justify-center"><Label dim={dim}>{label}</Label></div>
  </div>
);

const Seg = ({ cls, w, segs, gap }: { cls: string; w: string; gap: string; segs: { label: string; w: string; icon: React.ReactNode }[] }) => (
  <div className={`flex shrink-0 flex-col ${cls} ${w}`}>
    <div className={`${btn} w-full overflow-hidden`}>
      {segs.map((s, i) => (
        <div key={s.label} className={`flex h-full items-center justify-center ${s.w} ${i ? "border-l-2 border-[#e3e3e3]" : ""}`}>{s.icon}</div>
      ))}
    </div>
    <div className={`mt-[13px] flex justify-center ${gap}`}>
      {segs.map((s) => <Label dim key={s.label}>{s.label}</Label>)}
    </div>
  </div>
);

const Toolbar = () => (
  <header className="relative flex h-[118px] shrink-0 border-b-2 border-[#a9a9a9] bg-linear-to-b from-[#e2e2e2] to-[#c8c8c8] pt-[26px] pl-[16px]">
    <Tool label="Insert" cls="" chev icon={<PlusI />} />
    <Tool label="Data" cls="ml-[16px]" chev icon={<DataI />} />
    <Tool label="Create Symbol" dim cls="ml-[193px]" icon={<SymI c="#dcb0ee" />} />
    <Tool label="Symbols" cls="ml-[49px]" chev icon={<SymI c="#777" />} />
    <Seg cls="ml-[168px]" w="w-[218px]" gap="gap-[18px] pl-[2px]" segs={[
      { label: "Forward", w: "w-[110px]", icon: <ForwardI /> },
      { label: "Backward", w: "w-[108px]", icon: <BackwardI /> },
    ]} />
    <Seg cls="ml-[16px]" w="w-[218px]" gap="gap-[34px] pl-[12px]" segs={[
      { label: "Group", w: "w-[111px]", icon: <GroupI /> },
      { label: "Ungroup", w: "w-[107px]", icon: <UngroupI /> },
    ]} />
    <Tool label="Edit" dim cls="ml-[168px]" icon={<EditI />} />
    <Tool label="Rotate" dim cls="ml-[16px]" icon={<RotateI />} />
    <Tool label="Mask" dim cls="ml-[16px]" icon={<MaskI />} />
    <Tool label="Scale" dim cls="ml-[16px]" icon={<ScaleI />} />
    <Tool label="Flatten" dim cls="ml-[16px]" icon={<FlattenI />} />
    <Seg cls="ml-[168px]" w="w-[431px]" gap="gap-[19px]" segs={[
      { label: "Union", w: "w-[111px]", icon: <UnionI /> },
      { label: "Subtract", w: "w-[106px]", icon: <SubtractI /> },
      { label: "Intersect", w: "w-[106px]", icon: <IntersectI /> },
      { label: "Difference", w: "w-[108px]", icon: <DifferenceI /> },
    ]} />
    <div className="ml-[170px] flex w-[176px] shrink-0 flex-col items-center">
      <div className={`${btn} w-full justify-between px-[9px]`}>
        <span className="flex h-[26px] w-[26px] items-center justify-center rounded-full bg-[#e2e2e2]">
          <svg width="14" height="2" viewBox="0 0 14 2"><path d="M0 1h14" stroke="#777" strokeWidth="2" /></svg>
        </span>
        <span className="text-[22px] text-[#555555]">5%</span>
        <span className="flex h-[26px] w-[26px] items-center justify-center rounded-full bg-[#e2e2e2]">
          <svg width="16" height="16" viewBox="0 0 16 16"><path d="M0 8h16M8 0v16" stroke="#777" strokeWidth="2" /></svg>
        </span>
      </div>
      <div className="mt-[13px]"><Label>Zoom</Label></div>
    </div>
    <Tool label="View" cls="ml-[18px]" chev icon={<ViewI />} />
    <Tool label="Preview" cls="ml-[169px]" icon={<PreviewI />} />
    <Tool label="Export" cls="ml-[16px]" icon={<ExportI />} />
    <div className="absolute top-0 right-0 h-[2px] w-[175px] rounded-bl-[2px] bg-[#a8a8a8]" />
  </header>
);

/* ---------- left panel ---------- */
const LeftPanel = () => (
  <aside className="relative flex w-[462px] shrink-0 flex-col border-r-2 border-[#c9c9c9] bg-[#fbfbfb]">
    <div className="h-[4px] w-[112px] bg-[#307df6]" />
    <div className="flex h-[54px] items-center pr-[26px] pl-[17px]">
      <span className="w-[112px] text-[20px] font-semibold text-[#2a2a2a]">LAYERS</span>
      <span className="text-[20px] font-semibold tracking-[0.2px] text-[#808080]">COMPONENTS</span>
      <svg className="ml-auto" width="22" height="22" viewBox="0 0 22 22" stroke="#777" strokeWidth="1.5"><path d="M11 0v22M0 11h22" /></svg>
      <svg className="ml-[24px]" width="20" height="11" viewBox="0 0 20 11" fill="none" stroke="#777" strokeWidth="1.5"><path d="M1 10 10 1l9 9" /></svg>
    </div>
    <nav className="flex flex-col px-[6px] pt-[4px] text-[22px] text-[#2a2a2a]">
      {["ADA", "rweb - breakpoints", "rweb - E2E flows", "apps - E2E flows", "Symbols"].map((t, i) => (
        <div key={t} className={`flex h-[50px] items-center rounded-[8px] pt-[1px] pl-[42px] ${i === 2 ? "bg-[#307df6] text-white" : ""}`}>{t}</div>
      ))}
    </nav>
    <div className="mt-auto flex h-[63px] shrink-0 items-center border-y-2 border-[#e3e3e3] bg-white pl-[18px]">
      <svg width="30" height="24" viewBox="0 0 30 24" fill="none" stroke="#8a8a8a" strokeWidth="1.6">
        <circle cx="10" cy="10" r="8.5" />
        <path d="M16 16.5 22 23" />
        <path d="M24 9h6l-3 4Z" fill="#777" stroke="none" />
      </svg>
      <span className="ml-[14px] text-[22px] text-[#8c8c8c]">Search Layers</span>
    </div>
    <div className="flex h-[191px] shrink-0 flex-col overflow-hidden bg-[#f0f0f0] pt-[8px] pl-[48px] text-[22px] text-[#222222]">
      {["Valid address with n", "Invalid address, map", "Invalid address, aut", "Invalid address, wit"].map((t) => (
        <div key={t} className="flex h-[50px] shrink-0 items-center gap-[17px]">
          <span className="w-[30px] font-light text-[#8a8a8a]">Aa</span>
          <span>{t}</span>
        </div>
      ))}
    </div>
  </aside>
);

/* ---------- right strip ---------- */
const c7 = "#757575";
const StripIcons: React.ReactNode[] = [
  <svg key="a" width="40" height="40" viewBox="0 0 40 40" fill="none" stroke={c7} strokeWidth="3.4"><path d="M20 28V3M9 13 20 2l11 11" /><path d="M2 26v11h36V26" /></svg>,
  <svg key="b" width="22" height="26" viewBox="0 0 22 26" fill={c7}><path d="M0 0 22 13 0 26Z" /></svg>,
  <svg key="c" width="26" height="32" viewBox="0 0 26 32" fill={c7}><path d="M16 0 0 18h10L8 32 26 13H14Z" /></svg>,
  <svg key="d" width="36" height="42" viewBox="0 0 36 42"><path fillRule="evenodd" fill={c7} d="M18 0 36 10v22L18 42 0 32V10ZM18 14a7 7 0 1 0 0 14 7 7 0 0 0 0-14Z" /></svg>,
  <svg key="e" width="40" height="40" viewBox="0 0 40 40" fill="none"><rect x="1" y="1" width="38" height="38" stroke={c7} strokeWidth="2" strokeDasharray="2 2" /><rect x="6" y="7" width="12" height="12" fill={c7} /><path d="M22 9h12M22 16h12M6 25h28M6 32h28" stroke={c7} strokeWidth="3" /></svg>,
  <svg key="f" width="40" height="40" viewBox="0 0 40 40" fill="none"><rect x="0" y="0" width="18" height="18" fill={c7} /><rect x="23" y="1" width="16" height="16" stroke={c7} strokeWidth="2" strokeDasharray="4 2" /><rect x="1" y="23" width="16" height="16" stroke={c7} strokeWidth="2" strokeDasharray="4 2" /></svg>,
  <svg key="g" width="40" height="40" viewBox="0 0 40 40" fill="none" stroke={c7}><path d="M2 2h36v36H2Z" strokeWidth="2" /><path d="M2 36V26L22 9l11 9-18 20Z" strokeWidth="2.4" fill="#f7f7f7" /><path d="M22 9l11 9 4-5-10-9Z" fill={c7} /><rect x="0" y="0" width="6" height="6" fill={c7} /><rect x="34" y="0" width="6" height="6" fill={c7} /><rect x="34" y="34" width="6" height="6" fill={c7} /></svg>,
  <svg key="h" width="40" height="40" viewBox="0 0 40 40" fill="none" stroke={c7}><path d="M27 6H1v33h33V19" strokeWidth="2.4" /><path d="M32 0v16M24 8h16" strokeWidth="4" /><path d="M5 32l4-6 3 4 7-10 9 12Z" fill={c7} stroke="none" /></svg>,
];

const Strip2 = () => (
  <div className="flex w-[83px] shrink-0 flex-col border-x-2 border-[#cbcbcb] bg-[#f8f8f8]">
    <div className="flex h-[52px] shrink-0 items-center justify-center bg-[#c8c8c8]">
      <svg width="30" height="28" viewBox="0 0 30 28" fill={c7}><path d="M13 0A14 14 0 0 0 13 28ZM16 0h12v6H20a6 6 0 0 1-4-2ZM16 28h12v-9l-12 9Z" /></svg>
    </div>
    {StripIcons.map((ic, i) => (
      <div key={i} className="flex h-[80px] shrink-0 items-center justify-center border-b-2 border-[#e2e2e2] pt-[6px]">{ic}</div>
    ))}
  </div>
);

/* ---------- inspector ---------- */
const alignPaths = [
  "M1 1v22M25 1v22M9 5h8v14H9Z", "M0 1h26M0 23h26M5 8h16v8H5Z", "", "M1 0v24M6 8h18v8H6Z", "M13 0v24M3 8h20v8H3Z",
  "M25 0v24M2 8h18v8H2Z", "M0 1h26M9 6h8v18H9Z", "M0 12h26M9 2h8v20H9Z", "M0 23h26M9 1h8v18H9Z",
];
const Align = () => (
  <div className="flex h-[52px] shrink-0 items-center justify-between border-b-2 border-[#e2e2e2] bg-white pr-[22px] pl-[25px]">
    {alignPaths.map((d, i) =>
      d ? (
        <svg key={i} width="26" height="24" viewBox="0 0 26 24" fill="none" stroke="#c6c6c6" strokeWidth="1.6"><path d={d} /></svg>
      ) : (
        <svg key={i} width="6" height="22" viewBox="0 0 6 22" fill="#c6c6c6"><circle cx="3" cy="3" r="2" /><circle cx="3" cy="11" r="2" /><circle cx="3" cy="19" r="2" /></svg>
      ),
    )}
  </div>
);

const Inp = ({ t }: { t: string }) => (
  <div className="flex h-[42px] w-[126px] items-center justify-end rounded-[6px] border-2 border-[#e6e6e6] bg-[#f7f7f7] pr-[8px] text-[15px] font-semibold text-[#c2c2c2]">{t}</div>
);
const Flip = ({ d }: { d: React.ReactNode }) => (
  <div className="flex h-[42px] w-[58px] items-center justify-center rounded-[8px] border-2 border-[#e3e3e3]">{d}</div>
);

const Row = ({ t, last }: { t: string; last?: boolean }) => (
  <div className={`flex h-[64px] shrink-0 items-center justify-between pr-[24px] text-[22px] font-semibold text-[#222222] ${last ? "" : "border-b-2 border-[#e2e2e2]"}`}>
    <span>{t}</span>
    <svg width="22" height="22" viewBox="0 0 22 22" stroke="#a8a8a8" strokeWidth="1.5"><path d="M11 0v22M0 11h22" /></svg>
  </div>
);

const Inspector = () => (
  <aside className="flex w-[477px] shrink-0 flex-col bg-[#f2f2f2]">
    <Align />
    <div className="flex h-[145px] shrink-0 flex-col gap-[20px] border-b-2 border-[#e2e2e2] pt-[20px] pr-[18px] pl-[21px]">
      <div className="flex justify-between"><Inp t="X" /><Inp t="Y" /><Inp t="°" /></div>
      <div className="flex justify-between">
        <Inp t="W" /><Inp t="H" />
        <div className="flex w-[126px] justify-between">
          <Flip d={<svg width="24" height="22" viewBox="0 0 24 22" fill="none" stroke="#c2c2c2" strokeWidth="1.6"><path d="M10 1 1 21h9Z" /><path d="M14 1l9 20h-9Z" fill="#d5d5d5" /></svg>} />
          <Flip d={<svg width="24" height="22" viewBox="0 0 24 22" fill="none" stroke="#c2c2c2" strokeWidth="1.6"><path d="M1 1l22 9H1Z" /><path d="M1 21l22-8H1Z" fill="#d5d5d5" /></svg>} />
        </div>
      </div>
    </div>
    <div className="flex flex-col pl-[21px]">
      <div className="flex h-[64px] shrink-0 items-center justify-between border-b-2 border-[#e2e2e2] pr-[24px]">
        <span className="text-[18px] font-semibold tracking-[0.6px] text-[#888888]">STYLE</span>
        <svg width="20" height="10" viewBox="0 0 20 10" fill="none" stroke="#555" strokeWidth="1.5"><path d="M1 1l9 8 9-8" /></svg>
      </div>
      <Row t="Fills" /><Row t="Borders" /><Row t="Shadows" /><Row t="Inner Shadows" /><Row t="Blur" last />
    </div>
    <div className="h-[2px] w-full bg-[#e2e2e2]" />
  </aside>
);

export default function App() {
  return (
    <div className="flex h-[2078px] w-[3358px] flex-col overflow-hidden bg-[#f9f9f9] font-[Inter,sans-serif]">
      <Toolbar />
      <div className="flex min-h-0 flex-1">
        <LeftPanel />
        <main className="relative flex-1 overflow-hidden bg-[#f9f9f9]">
          {boards.map((b) => <Artboard key={b.title} b={b} />)}
        </main>
        <Strip2 />
        <Inspector />
      </div>
    </div>
  );
}
